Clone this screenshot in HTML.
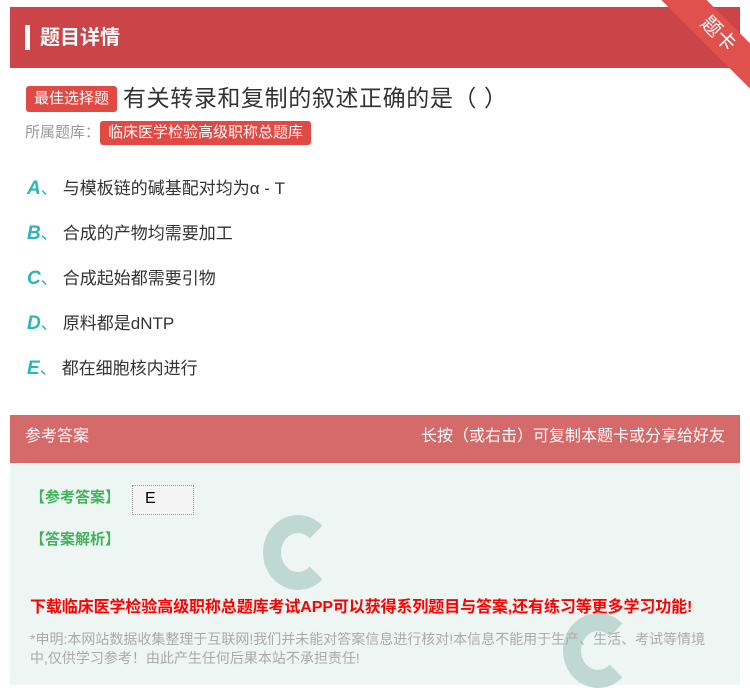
<!DOCTYPE html>
<html><head><meta charset="utf-8"><style>
*{margin:0;padding:0;box-sizing:border-box}
body{width:750px;height:685px;background:#fff;font-family:"Liberation Sans","Noto Sans CJK SC",sans-serif;position:relative;overflow:hidden}
.hdr{position:absolute;left:10px;top:7px;width:730px;height:61px;background:#cb4548}
.hdr .bar{position:absolute;left:15px;top:18px;width:5px;height:25px;background:#fff}
.hdr .t{position:absolute;left:30px;top:14px;color:#fff;font-size:20px;font-weight:bold}
.rib{position:absolute;width:140px;height:32px;background:#e0504c;transform:rotate(45deg);color:#fff;font-size:20px;text-align:center;line-height:32px;top:18px;right:-38px}
.q{position:absolute;left:26px;top:79px;font-size:23px;color:#333;letter-spacing:0.6px}
.tag{display:inline-block;background:#e04a45;color:#fff;font-size:15px;padding:0 8px;border-radius:3px;height:26px;line-height:26px;vertical-align:3px;margin-right:6px;letter-spacing:0}
.lib{position:absolute;left:25px;top:121px;font-size:15px;color:#999}
.lib span{display:inline-block;background:#e04a45;color:#fff;padding:0 8px;border-radius:3px;height:24px;line-height:24px}
.opt{position:absolute;left:27px;font-size:17px;color:#333}
.opt b{color:#2bb5b5;font-style:italic;font-size:19px}
.opt i{color:#2bb5b5;font-style:normal;font-size:17px;margin-right:5px}
.ah{position:absolute;left:10px;top:415px;width:730px;height:48px;background:#d46a6a;color:#fff;font-size:16px;line-height:44px;padding:0 15px}
.ah span{float:right}
.ab{position:absolute;left:10px;top:463px;width:730px;height:222px;background:#eef6f4}
.g{color:#3fb25a;font-size:15px;font-weight:bold;position:absolute;left:20px}
.red{position:absolute;left:20px;top:130px;color:#f00;font-size:16px;font-weight:bold;letter-spacing:-0.1px;white-space:nowrap}
.dis{position:absolute;left:20px;top:167px;color:#aaa;font-size:14px;width:690px;line-height:19px}
.box{position:absolute;left:122px;top:22px;width:62px;height:30px;background:#f4f4f4;border:1px dotted #999;font-size:16px;padding:4px 12px}
.c{position:absolute;width:70px;height:75px;border-radius:50%;border:18px solid #bfd8d2;border-right-color:transparent}
</style></head><body>
<div class="hdr"><div class="bar"></div><div class="t">题目详情</div></div>
<div class="rib">题卡</div>
<div class="q"><span class="tag">最佳选择题</span>有关转录和复制的叙述正确的是（ ）</div>
<div class="lib">所属题库：<span>临床医学检验高级职称总题库</span></div>
<div class="opt" style="top:174px"><b>A</b><i>、</i>与模板链的碱基配对均为α - T</div>
<div class="opt" style="top:219px"><b>B</b><i>、</i>合成的产物均需要加工</div>
<div class="opt" style="top:264px"><b>C</b><i>、</i>合成起始都需要引物</div>
<div class="opt" style="top:309px"><b>D</b><i>、</i>原料都是dNTP</div>
<div class="opt" style="top:354px"><b>E</b><i>、</i>都在细胞核内进行</div>
<div class="ah">参考答案<span>长按（或右击）可复制本题卡或分享给好友</span></div>
<div class="ab">
<div class="c" style="left:253px;top:52px"></div>
<div class="c" style="left:553px;top:150px"></div>
<div class="g" style="top:23px">【参考答案】</div>
<div class="box">E</div>
<div class="g" style="top:65px">【答案解析】</div>
<div class="red">下载临床医学检验高级职称总题库考试APP可以获得系列题目与答案,还有练习等更多学习功能!</div>
<div class="dis">*申明:本网站数据收集整理于互联网!我们并未能对答案信息进行核对!本信息不能用于生产、生活、考试等情境中,仅供学习参考！由此产生任何后果本站不承担责任!</div>
</div>
</body></html>
